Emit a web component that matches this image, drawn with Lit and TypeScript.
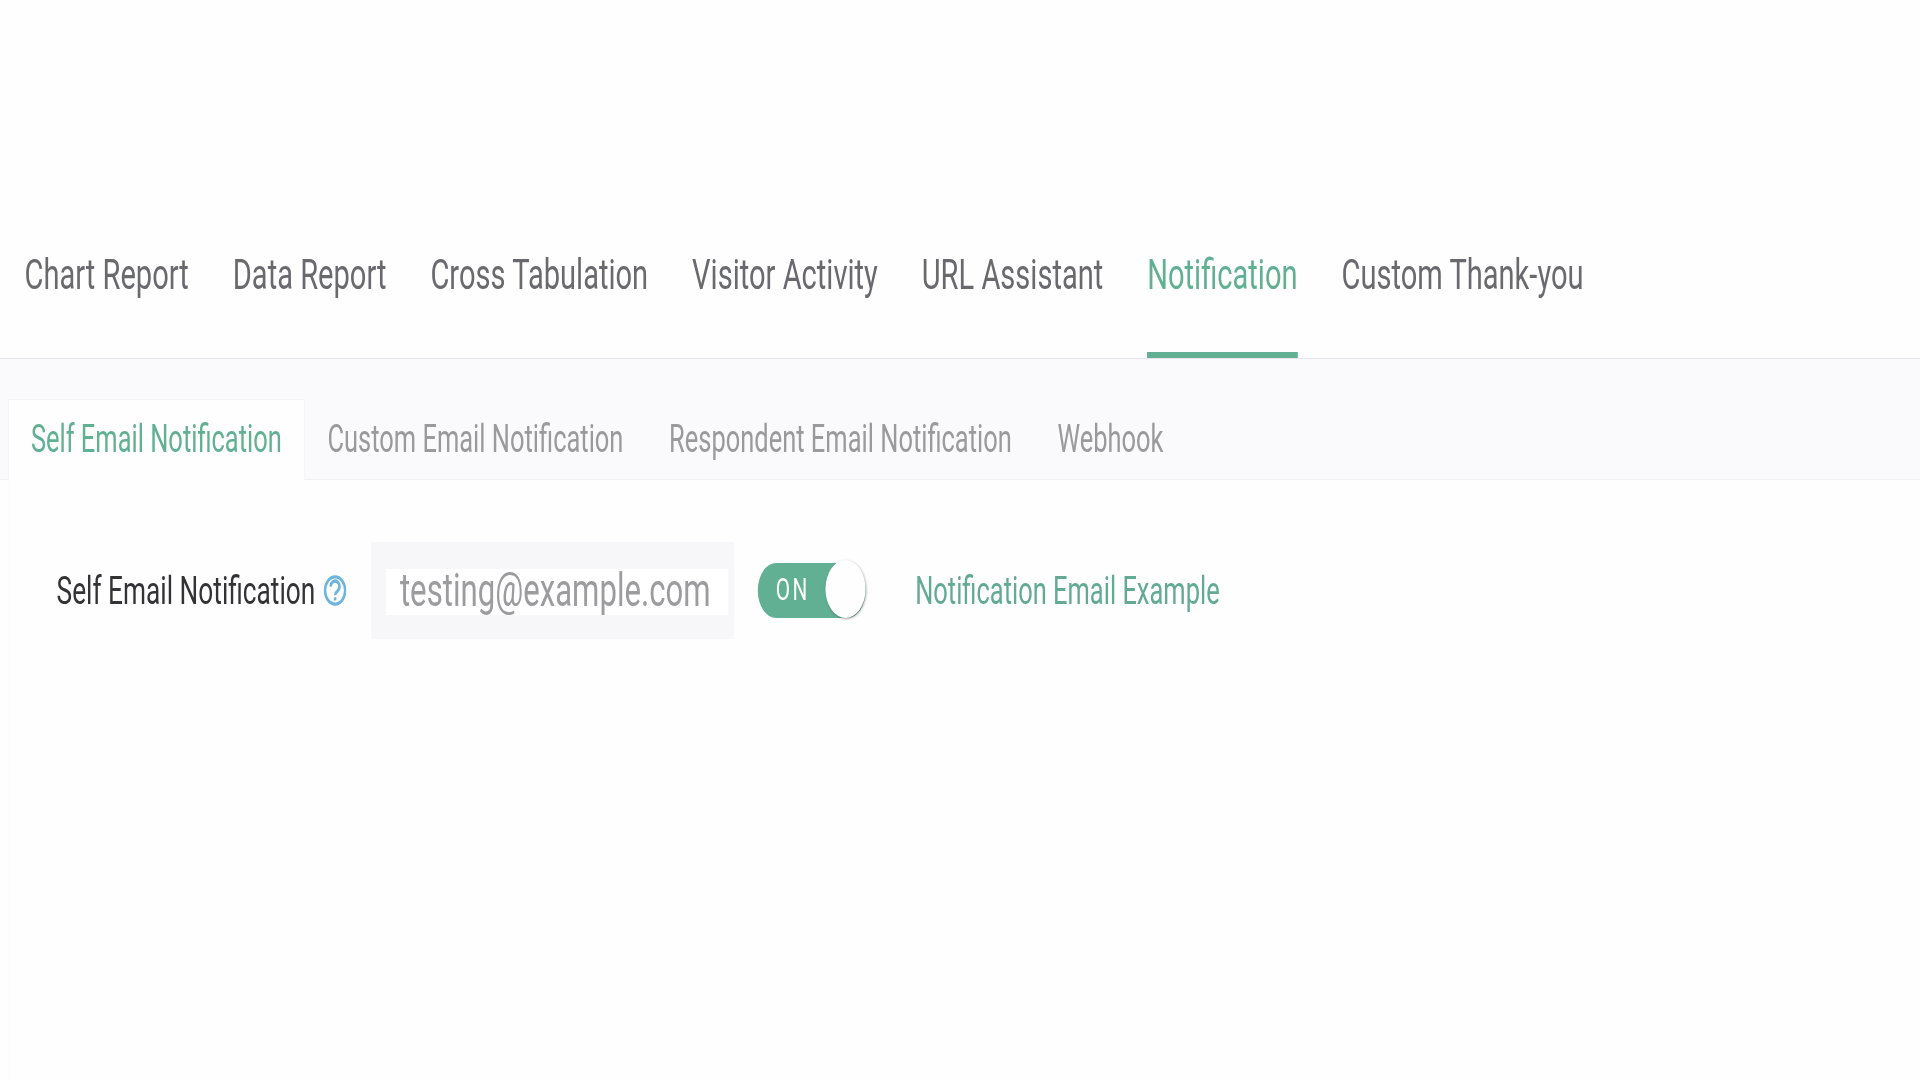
import { LitElement, html, css } from "lit";
import { customElement } from "lit/decorators.js";

const TABS = ["Chart Report", "Data Report", "Cross Tabulation", "Visitor Activity", "URL Assistant", "Notification", "Custom Thank-you"];
const SUBTABS = ["Self Email Notification", "Custom Email Notification", "Respondent Email Notification", "Webhook"];

@customElement("app-root")
export class AppRoot extends LitElement {
  static styles = css`
    :host { display: block; width: 1920px; height: 1080px; overflow: hidden; background: #fffeff; font-family: Roboto, "Liberation Sans", sans-serif; }
    /* The reference is a frame stretched vertically: lay out in a wider space and squeeze it horizontally. */
    .stage { width: 2866px; height: 1080px; transform: scaleX(0.67); transform-origin: 0 0; filter: blur(0.6px); display: flex; flex-direction: column; }
    .tabs { display: flex; gap: 65.6px; padding: 243px 0 0 36.5px; height: 115px; border-bottom: 1px solid #e5e5e7; flex: none; }
    .tab { height: 115px; box-sizing: border-box; line-height: 64px; font-size: 43.4px; color: #6a6a6e; border-bottom: 6px solid transparent; white-space: nowrap; }
    .tab.active { color: #62b094; border-bottom-color: #62b094; }
    .subtabs { display: flex; height: 120px; flex: none; box-sizing: content-box; align-items: flex-end; padding-left: 12px; background: #faf9fb; border-bottom: 1px solid #f0eff1; }
    .subtab { height: 80px; line-height: 79px; padding: 0 33.1px; font-size: 38px; color: #9a9a9e; white-space: nowrap; border: 1px solid transparent; border-bottom: 0; margin-bottom: -1px; }
    .subtab.active { background: #fffeff; color: #62b094; border-color: #f3f2f4; }
    .panel { flex: 1; margin-left: 13.4px; border-left: 1.5px solid #f5f4f6; padding: 62px 0 0 70px; }
    .row { display: flex; align-items: center; height: 97px; }
    .label { font-size: 39.2px; color: #333336; white-space: nowrap; }
    .help { width: 34.3px; height: 31px; margin-left: 12px; flex: none; display: block; }
    .field { margin-left: 37px; width: 542px; height: 97px; box-sizing: border-box; padding: 27px 9px 27px 22px; background: #f7f6f8; flex: none; display: flex; }
    .input { flex: 1; height: 46px; background: #fff; color: #9c9c9f; font-size: 46.5px; line-height: 42px; padding-left: 21px; white-space: nowrap; }
    .toggle { margin-left: 35px; width: 161px; height: 55px; border-radius: 28px; background: #62b094; position: relative; flex: none; color: #fff; font-size: 31px; line-height: 54px; letter-spacing: 3.5px; padding-left: 27px; box-sizing: border-box; }
    .knob { position: absolute; right: 0; top: -3px; width: 60px; height: 58px; border-radius: 50%; background: #fffeff; box-shadow: 1px 1px 3px rgba(0,0,0,.35); }
    .link { margin-left: 74px; font-size: 38px; color: #62ab92; white-space: nowrap; }
  `;
  render() {
    return html`<div class="stage">
      <div class="tabs">${TABS.map((t) => html`<div class="tab ${t === "Notification" ? "active" : ""}">${t}</div>`)}</div>
      <div class="subtabs">${SUBTABS.map((t, i) => html`<div class="subtab ${i === 0 ? "active" : ""}">${t}</div>`)}</div>
      <div class="panel">
        <div class="row">
          <span class="label">Self Email Notification</span>
          <svg class="help" viewBox="0 0 24 24" preserveAspectRatio="none" fill="none" stroke="#6db5dd" stroke-width="2.6">
            <circle cx="12" cy="12" r="10.5"></circle>
            <path d="M7.4 9a4.6 4.2 0 1 1 7.2 3.4c-1.7 1-2.6 1.6-2.6 3.3"></path>
            <path d="M12 17.2v2.6"></path>
          </svg>
          <div class="field"><div class="input">testing@example.com</div></div>
          <div class="toggle">ON<span class="knob"></span></div>
          <span class="link">Notification Email Example</span>
        </div>
      </div>
    </div>`;
  }
}
